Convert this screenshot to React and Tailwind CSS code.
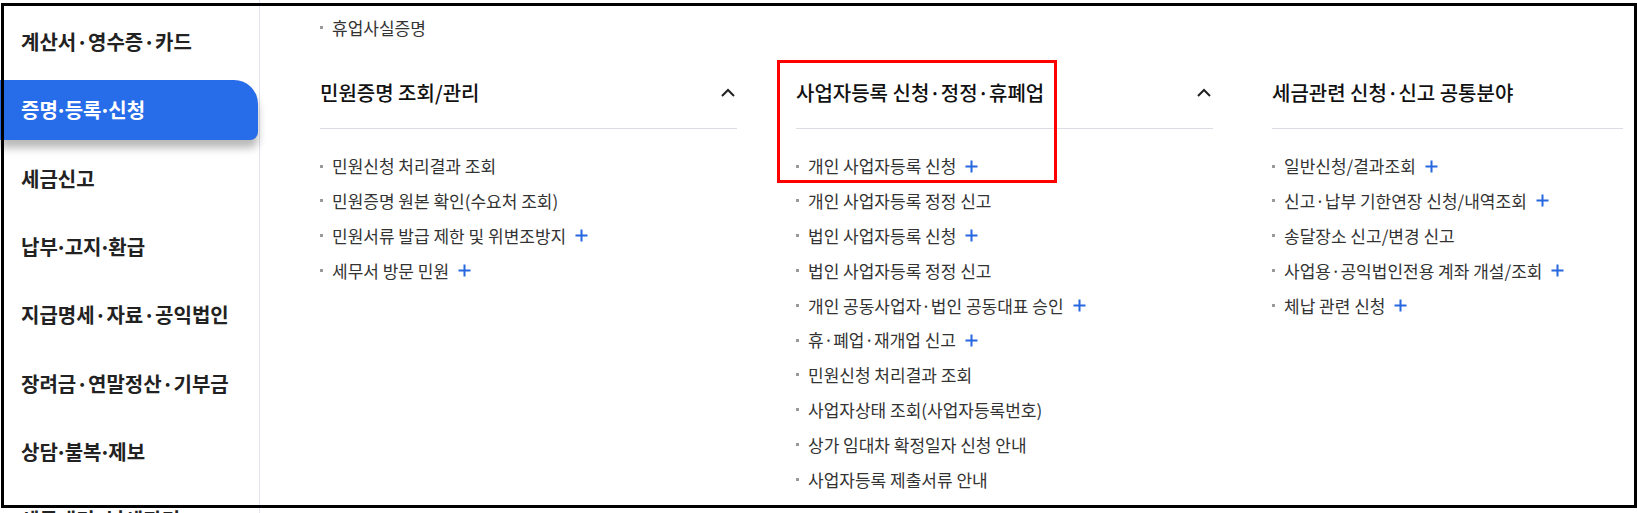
const sideMenu = [
  { label: "계산서·영수증·카드" },
  { label: "증명·등록·신청", active: true, tight: true },
  { label: "세금신고" },
  { label: "납부·고지·환급", tight: true },
  { label: "지급명세·자료·공익법인" },
  { label: "장려금·연말정산·기부금" },
  { label: "상담·불복·제보", tight: true },
  { label: "세무대리·납세관리" },
];

const groups = [
  {
    title: "민원증명 조회/관리",
    items: [
      { text: "민원신청 처리결과 조회" },
      { text: "민원증명 원본 확인(수요처 조회)" },
      { text: "민원서류 발급 제한 및 위변조방지", more: true },
      { text: "세무서 방문 민원", more: true },
    ],
  },
  {
    title: "사업자등록 신청·정정·휴폐업",
    items: [
      { text: "개인 사업자등록 신청", more: true },
      { text: "개인 사업자등록 정정 신고" },
      { text: "법인 사업자등록 신청", more: true },
      { text: "법인 사업자등록 정정 신고" },
      { text: "개인 공동사업자·법인 공동대표 승인", more: true },
      { text: "휴·폐업·재개업 신고", more: true },
      { text: "민원신청 처리결과 조회" },
      { text: "사업자상태 조회(사업자등록번호)" },
      { text: "상가 임대차 확정일자 신청 안내" },
      { text: "사업자등록 제출서류 안내" },
    ],
  },
  {
    title: "세금관련 신청·신고 공통분야",
    items: [
      { text: "일반신청/결과조회", more: true },
      { text: "신고·납부 기한연장 신청/내역조회", more: true },
      { text: "송달장소 신고/변경 신고" },
      { text: "사업용·공익법인전용 계좌 개설/조회", more: true },
      { text: "체납 관련 신청", more: true },
    ],
  },
];

const PlusIcon = () => (
  <svg width="13" height="13" viewBox="0 0 13 13" className="ml-[9px] shrink-0">
    <path d="M6.5 0.5v12M0.5 6.5h12" stroke="#2767e0" strokeWidth="2" fill="none" />
  </svg>
);

const ChevronUp = () => (
  <svg width="14" height="9" viewBox="0 0 14 9" className="shrink-0">
    <polyline points="1,8 7,2 13,8" stroke="#222" strokeWidth="2" fill="none" />
  </svg>
);

// some menu labels use a narrower middle dot
const MenuLabel = ({ label, tight }) => {
  if (!tight) return <span>{label}</span>;
  const parts = label.split("·");
  return (
    <span className="whitespace-nowrap">
      {parts.map((p, i) => (
        <span key={i}>
          {p}
          {i < parts.length - 1 && <span className="-mx-[2.5px]">·</span>}
        </span>
      ))}
    </span>
  );
};

const ListItem = ({ text, more }) => (
  <li className="flex items-center h-[34.8px] text-[17px] text-[#333] whitespace-nowrap">
    <span className="w-[3px] h-[3px] bg-[#9a9a9a] mr-[9px] shrink-0" />
    <span>{text}</span>
    {more && <PlusIcon />}
  </li>
);

export default function App() {
  return (
    <div className="relative h-[513px] w-[1637px] overflow-hidden bg-white font-['Noto_Sans_CJK_KR',sans-serif]">
      <div className="flex h-full">
        {/* left menu */}
        <nav className="w-[260px] shrink-0 border-r border-[#e2e2f2] h-full">
          <ul className="flex flex-col gap-[8.33px] pt-[12px]">
            {sideMenu.map((m) => (
              <li
                key={m.label}
                className={
                  m.active
                    ? "flex items-center h-[60px] w-[258px] pl-[21px] text-[20px] font-bold text-white bg-[#276ce8] rounded-tr-[24px] rounded-br-[8px] shadow-[0_8px_8px_rgba(0,0,0,0.28)]"
                    : "flex items-center h-[60px] w-[258px] pl-[21px] text-[20px] font-bold text-[#222]"
                }
              >
                <MenuLabel {...m} />
              </li>
            ))}
          </ul>
        </nav>

        {/* menu panel */}
        <div className="w-[1363px] shrink-0 overflow-hidden pl-[60px] pt-[10px]">
          <ul>
            <ListItem text="휴업사실증명" />
          </ul>
          <div className="grid grid-cols-[417px_417px_417px] gap-x-[59px] mt-[13px]">
            {groups.map((g) => (
              <section key={g.title}>
                <div className="flex items-center justify-between h-[71px] border-b border-[#dcdce4]">
                  <h3 className="text-[20px] font-medium text-[#111] whitespace-nowrap">{g.title}</h3>
                  <span className="mr-[2px]">
                    <ChevronUp />
                  </span>
                </div>
                <ul className="pt-[20px]">
                  {g.items.map((it) => (
                    <ListItem key={it.text} {...it} />
                  ))}
                </ul>
              </section>
            ))}
          </div>
        </div>
      </div>

      {/* capture frame */}
      <div className="pointer-events-none absolute left-[1px] top-[3px] w-[1636px] h-[505px] border-[3px] border-black" />
      {/* highlight box */}
      <div className="pointer-events-none absolute left-[777px] top-[60px] w-[280px] h-[123px] border-[3px] border-[#ff0000]" />
    </div>
  );
}
